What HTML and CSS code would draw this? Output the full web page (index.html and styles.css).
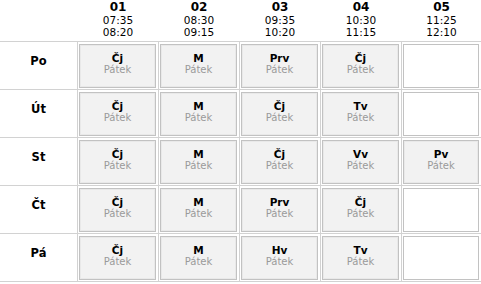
FILE: index.html
```html
<!DOCTYPE html>
<html lang="cs">
<head>
<meta charset="utf-8">
<title>Rozvrh</title>
<link rel="stylesheet" href="styles.css">
</head>
<body>
<div class="tt">
  <div class="row head">
    <div class="corner"></div>
    <div class="hc"><b>01</b><span>07:35</span><span>08:20</span></div>
    <div class="hc"><b>02</b><span>08:30</span><span>09:15</span></div>
    <div class="hc"><b>03</b><span>09:35</span><span>10:20</span></div>
    <div class="hc"><b>04</b><span>10:30</span><span>11:15</span></div>
    <div class="hc"><b>05</b><span>11:25</span><span>12:10</span></div>
  </div>
  <div class="row">
    <div class="day">Po</div>
    <div class="cell"><div class="box"><b>Čj</b><span>Pátek</span></div></div>
    <div class="cell"><div class="box"><b>M</b><span>Pátek</span></div></div>
    <div class="cell"><div class="box"><b>Prv</b><span>Pátek</span></div></div>
    <div class="cell"><div class="box"><b>Čj</b><span>Pátek</span></div></div>
    <div class="cell"><div class="box empty"></div></div>
  </div>
  <div class="row">
    <div class="day">Út</div>
    <div class="cell"><div class="box"><b>Čj</b><span>Pátek</span></div></div>
    <div class="cell"><div class="box"><b>M</b><span>Pátek</span></div></div>
    <div class="cell"><div class="box"><b>Čj</b><span>Pátek</span></div></div>
    <div class="cell"><div class="box"><b>Tv</b><span>Pátek</span></div></div>
    <div class="cell"><div class="box empty"></div></div>
  </div>
  <div class="row">
    <div class="day">St</div>
    <div class="cell"><div class="box"><b>Čj</b><span>Pátek</span></div></div>
    <div class="cell"><div class="box"><b>M</b><span>Pátek</span></div></div>
    <div class="cell"><div class="box"><b>Čj</b><span>Pátek</span></div></div>
    <div class="cell"><div class="box"><b>Vv</b><span>Pátek</span></div></div>
    <div class="cell"><div class="box"><b>Pv</b><span>Pátek</span></div></div>
  </div>
  <div class="row">
    <div class="day">Čt</div>
    <div class="cell"><div class="box"><b>Čj</b><span>Pátek</span></div></div>
    <div class="cell"><div class="box"><b>M</b><span>Pátek</span></div></div>
    <div class="cell"><div class="box"><b>Prv</b><span>Pátek</span></div></div>
    <div class="cell"><div class="box"><b>Čj</b><span>Pátek</span></div></div>
    <div class="cell"><div class="box empty"></div></div>
  </div>
  <div class="row">
    <div class="day">Pá</div>
    <div class="cell"><div class="box"><b>Čj</b><span>Pátek</span></div></div>
    <div class="cell"><div class="box"><b>M</b><span>Pátek</span></div></div>
    <div class="cell"><div class="box"><b>Hv</b><span>Pátek</span></div></div>
    <div class="cell"><div class="box"><b>Tv</b><span>Pátek</span></div></div>
    <div class="cell"><div class="box empty"></div></div>
  </div>
</div>
</body>
</html>
```

FILE: styles.css
```css
html, body {
  margin: 0;
  padding: 0;
  background: #fff;
}
body {
  font-family: "DejaVu Sans", Verdana, sans-serif;
  color: #000;
  width: 481px;
  overflow: hidden;
}
.tt {
  border-bottom: 1px solid #d2d2d2;
}
.row {
  display: grid;
  grid-template-columns: 77px repeat(4, 81px) 80px;
  height: 48px;
  border-top: 1px solid #d2d2d2;
  box-sizing: border-box;
}
.row.head {
  height: 41px;
  border-top: none;
}
.hc {
  display: flex;
  flex-direction: column;
  align-items: center;
  padding-top: 1px;
  padding-left: 1px;
  font-size: 10.5px;
  line-height: 12.5px;
}
.hc b {
  font-size: 12px;
}
.day {
  display: flex;
  align-items: center;
  justify-content: center;
  padding-bottom: 10px;
  font-weight: bold;
  font-size: 11.5px;
}
.cell {
  border-left: 1px solid #d2d2d2;
  padding: 2px 2px 1px 1px;
  box-sizing: border-box;
}
.box {
  height: 100%;
  box-sizing: border-box;
  border: 1px solid #c2c2c2;
  box-shadow: inset 0 0 0 1px #e9e9e9;
  background: #f2f2f2;
  display: flex;
  flex-direction: column;
  align-items: center;
  justify-content: center;
  padding-bottom: 4px;
  line-height: 12px;
}
.box.empty {
  background: #fff;
  box-shadow: none;
}
.box b {
  font-size: 10.5px;
}
.box span {
  font-size: 10px;
  color: #9a9a9a;
}
```
